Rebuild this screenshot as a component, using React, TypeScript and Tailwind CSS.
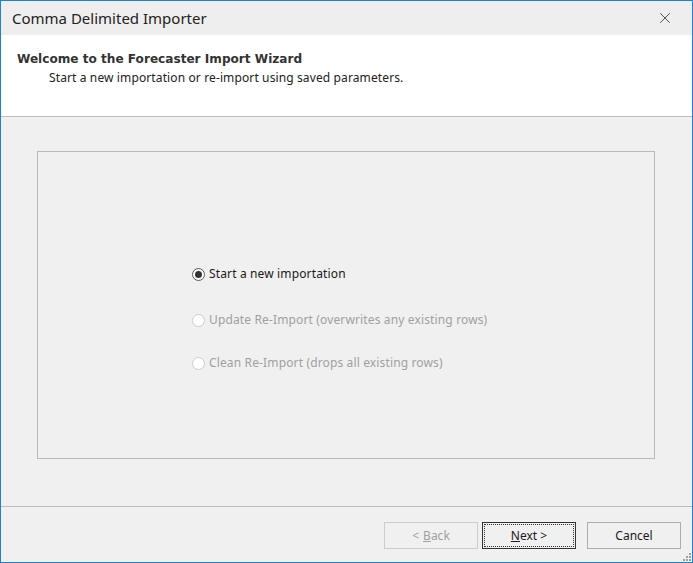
import { X } from "lucide-react";

const Radio = ({
  label,
  checked,
  disabled,
  className = "",
}: {
  label: string;
  checked?: boolean;
  disabled?: boolean;
  className?: string;
}) => (
  <label className={`flex items-center h-[16px] ${className}`}>
    <span
      className={`w-[13px] h-[13px] rounded-full border flex items-center justify-center bg-white ${
        disabled ? "border-[#cccccc] bg-[#f5f5f5]" : "border-[#5a5a5a]"
      }`}
    >
      {checked && <span className="w-[7px] h-[7px] rounded-full bg-[#333333]" />}
    </span>
    <span
      className={`ml-[4px] text-[12px] tracking-[0.14px] ${
        disabled ? "text-[#a0a0a0]" : "text-[#1a1a1a]"
      }`}
    >
      {label}
    </span>
  </label>
);

const Button = ({
  children,
  disabled,
  focused,
}: {
  children: React.ReactNode;
  disabled?: boolean;
  focused?: boolean;
}) => (
  <button
    className={`w-[94px] h-[27px] text-[12px] border flex items-center justify-center ${
      disabled
        ? "border-[#cccccc] text-[#a0a0a0] bg-[#f0f0f0]"
        : focused
        ? "border-[#333333] text-[#1a1a1a] bg-[#f0f0f0]"
        : "border-[#adadad] text-[#1a1a1a] bg-[#f0f0f0]"
    }`}
  >
    {focused ? (
      <span className="w-[90px] h-[23px] border border-dotted border-[#333333] flex items-center justify-center">
        {children}
      </span>
    ) : (
      children
    )}
  </button>
);

export default function App() {
  return (
    <div
      className="w-[693px] h-[563px] border border-[#1883d7] flex flex-col bg-[#f0f0f0] relative"
      style={{ fontFamily: '"Noto Sans", "Open Sans", sans-serif' }}
    >
      {/* Title bar */}
      <div className="h-[34px] bg-[#eeeeee] flex items-center justify-between pl-[11px] pr-[18px]">
        <span className="text-[15px] text-[#222222]">Comma Delimited Importer</span>
        <X className="w-[18px] h-[18px] text-[#333333]" strokeWidth={1.1} />
      </div>

      {/* Header */}
      <div className="h-[82px] bg-white border-b border-[#bdbdbd] pl-[16px] pt-[15px]">
        <div
          className="font-bold text-[#333333] leading-[18px]"
          style={{ fontFamily: '"DejaVu Sans", sans-serif', fontSize: "12.1px" }}
        >
          Welcome to the Forecaster Import Wizard
        </div>
        <div className="text-[12px] tracking-[0.12px] text-[#222222] pl-[32px] leading-[18px] mt-[1px]">
          Start a new importation or re-import using saved parameters.
        </div>
      </div>

      {/* Body */}
      <div className="flex-1 pl-[36px] pr-[37px] pt-[34px] pb-[47px]">
        <div className="w-full h-full border border-[#b8b8b8] flex flex-col pl-[154px] pt-[114px]">
          <Radio label="Start a new importation" checked />
          <Radio label="Update Re-Import (overwrites any existing rows)" disabled className="mt-[30px]" />
          <Radio label="Clean Re-Import (drops all existing rows)" disabled className="mt-[27px]" />
        </div>
      </div>

      {/* Footer */}
      <div className="h-[56px] border-t border-[#bdbdbd] flex items-start justify-end pt-[15px] pr-[11px]">
        <Button disabled>
          &lt; <span className="underline ml-[4px]">B</span>ack
        </Button>
        <div className="w-[4px]" />
        <Button focused>
          <span className="underline">N</span>ext &gt;
        </Button>
        <div className="w-[11px]" />
        <Button>Cancel</Button>
      </div>

      {/* Resize grip */}
      <svg className="absolute right-[1px] bottom-[1px]" width="8" height="8" viewBox="0 0 8 8">
        <rect x="6" y="0" width="2" height="2" fill="#a0a0a0" />
        <rect x="3" y="3" width="2" height="2" fill="#a0a0a0" />
        <rect x="6" y="3" width="2" height="2" fill="#a0a0a0" />
        <rect x="0" y="6" width="2" height="2" fill="#a0a0a0" />
        <rect x="3" y="6" width="2" height="2" fill="#a0a0a0" />
        <rect x="6" y="6" width="2" height="2" fill="#a0a0a0" />
      </svg>
    </div>
  );
}
